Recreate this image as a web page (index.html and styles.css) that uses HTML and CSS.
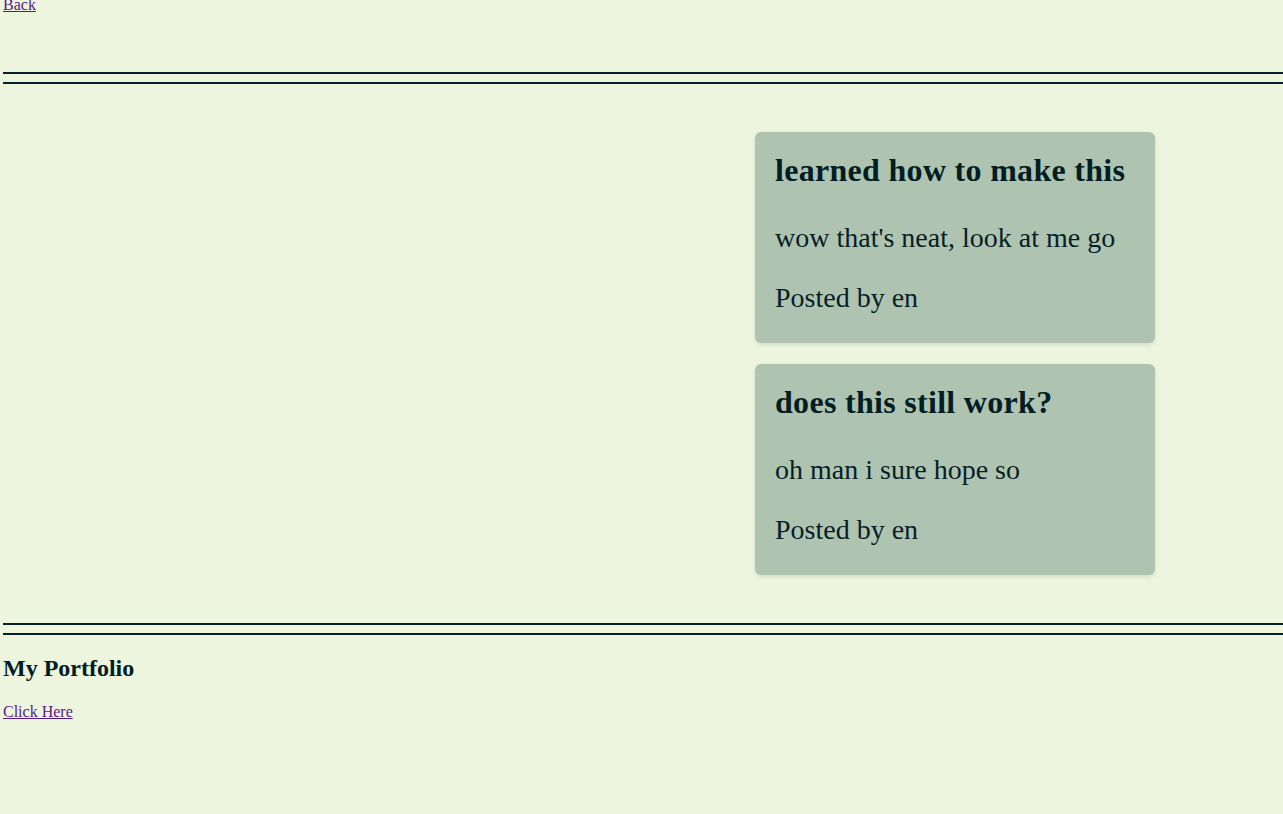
FILE: index.html
```html
<!DOCTYPE html>
<html lang="en">
<head>
<meta charset="utf-8">
<title>Posts</title>
<link rel="stylesheet" href="styles.css">
</head>
<body>
<nav class="topnav"><a class="link" href="#">Back</a></nav>
<div class="rule rule-top"></div>
<main class="main">
  <section class="posts">
    <article class="card">
      <h2 class="card-title">learned how to make this</h2>
      <p class="card-text">wow that's neat, look at me go</p>
      <p class="card-text">Posted by en</p>
    </article>
    <article class="card">
      <h2 class="card-title">does this still work?</h2>
      <p class="card-text">oh man i sure hope so</p>
      <p class="card-text">Posted by en</p>
    </article>
  </section>
</main>
<footer class="footer">
  <div class="rule"></div>
  <h2 class="footer-title">My Portfolio</h2>
  <p class="footer-text"><a class="link" href="#">Click Here</a></p>
</footer>
</body>
</html>
```

FILE: styles.css
```css
html, body {
  margin: 0;
  padding: 0;
}
body {
  background: #eef5de;
  color: #05202a;
  font-family: "Liberation Serif", "Times New Roman", serif;
  font-size: 16px;
  padding-left: 3px;
  min-height: 814px;
  box-sizing: border-box;
}
.link {
  color: #551a8b;
  text-decoration: underline;
}
.topnav {
  margin-top: -4px;
  line-height: 18px;
  height: 18px;
}
.rule {
  border-top: 2px solid #03222a;
  border-bottom: 2px solid #03222a;
  height: 8px;
}
.rule-top {
  margin-top: 58px;
}
.main {
  display: flex;
  justify-content: flex-end;
  padding: 48px 128px 48px 0;
}
.posts {
  display: flex;
  flex-direction: column;
  gap: 21px;
  width: 400px;
}
.card {
  background: #aec4b0;
  border-radius: 6px;
  box-shadow: 0 2px 4px rgba(0, 0, 0, 0.1);
  padding: 20px 20px 28px;
  height: 211px;
  box-sizing: border-box;
}
.card-title {
  margin: 0 0 31px;
  font-size: 32px;
  line-height: 37px;
  font-weight: 700;
  letter-spacing: 0.3px;
  color: #031d24;
}
.card-text {
  margin: 0 0 25px;
  font-size: 28px;
  line-height: 35px;
  color: #071e28;
}
.card-text:last-child {
  margin-bottom: 0;
}
.footer-title {
  margin: 19px 0 0;
  font-size: 24px;
  line-height: 28px;
  font-weight: 700;
  color: #031d24;
}
.footer-text {
  margin: 21px 0 0;
  line-height: 18px;
}
```
